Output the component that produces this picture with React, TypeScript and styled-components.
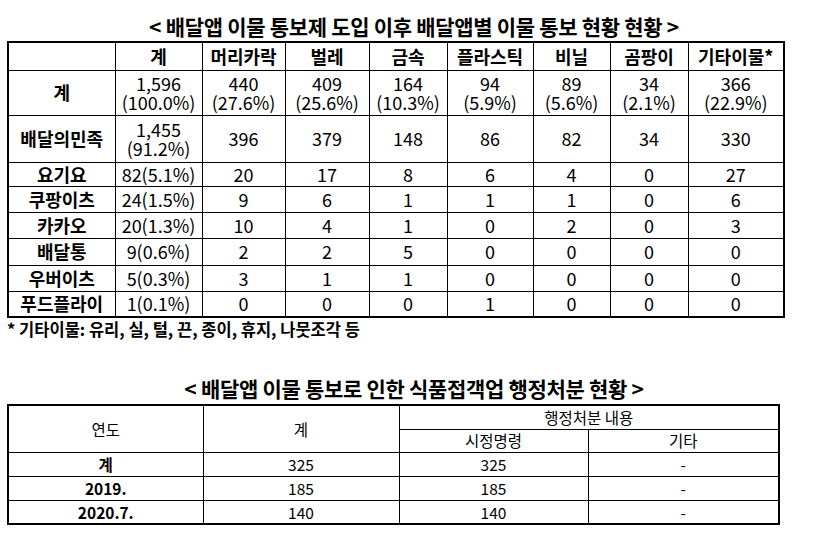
import React from "react";
import styled, { createGlobalStyle } from "styled-components";

const Global = createGlobalStyle`
  html, body { margin: 0; padding: 0; background: #fff; }
  body { font-family: "Noto Sans CJK KR", "Noto Sans", sans-serif; color: #000; }
`;

const Page = styled.div`
  width: 816px;
  height: 538px;
  overflow: hidden;
  display: flex;
  flex-direction: column;
`;

const Title = styled.div<{ $top: number; $h: number }>`
  height: ${(p) => p.$h}px;
  box-sizing: border-box;
  padding-top: ${(p) => p.$top}px;
  padding-left: 12px;
  text-align: center;
  font-size: 21px;
  font-weight: 700;
  line-height: 24px;
  letter-spacing: -0.3px;
  white-space: nowrap;
`;

const TableWrap = styled.div`
  padding-left: 7px;
`;

const Table = styled.table<{ $w: number; $fs: number }>`
  width: ${(p) => p.$w}px;
  border-collapse: collapse;
  table-layout: fixed;
  border: 2px solid #000;
  font-size: ${(p) => p.$fs}px;
  line-height: 1.05;
`;

const Row = styled.tr<{ $h: number }>`
  height: ${(p) => p.$h}px;
`;

const Cell = styled.td<{ $bold?: boolean }>`
  border: 1px solid #000;
  padding: 0;
  text-align: center;
  vertical-align: middle;
  font-weight: ${(p) => (p.$bold ? 700 : 400)};
  white-space: nowrap;
`;

const Line = styled.div`
  line-height: 19px;
`;

const Note = styled.div`
  padding-left: 7px;
  height: 22px;
  font-size: 16.5px;
  font-weight: 700;
  line-height: 22px;
`;

const Spacer = styled.div<{ $h: number }>`
  height: ${(p) => p.$h}px;
`;

const cols1 = [107, 87, 83, 84, 78, 86, 77, 78, 96];
const head1 = ["", "계", "머리카락", "벌레", "금속", "플라스틱", "비닐", "곰팡이", "기타이물*"];

type R = { label: string; h: number; cells: string[] };
const rows1: R[] = [
  { label: "계", h: 45, cells: ["1,596\n(100.0%)", "440\n(27.6%)", "409\n(25.6%)", "164\n(10.3%)", "94\n(5.9%)", "89\n(5.6%)", "34\n(2.1%)", "366\n(22.9%)"] },
  { label: "배달의민족", h: 47, cells: ["1,455\n(91.2%)", "396", "379", "148", "86", "82", "34", "330"] },
  { label: "요기요", h: 24, cells: ["82(5.1%)", "20", "17", "8", "6", "4", "0", "27"] },
  { label: "쿠팡이츠", h: 26, cells: ["24(1.5%)", "9", "6", "1", "1", "1", "0", "6"] },
  { label: "카카오", h: 26, cells: ["20(1.3%)", "10", "4", "1", "0", "2", "0", "3"] },
  { label: "배달통", h: 27, cells: ["9(0.6%)", "2", "2", "5", "0", "0", "0", "0"] },
  { label: "우버이츠", h: 26, cells: ["5(0.3%)", "3", "1", "1", "0", "0", "0", "0"] },
  { label: "푸드플라이", h: 26, cells: ["1(0.1%)", "0", "0", "0", "1", "0", "0", "0"] },
];

const cols2 = [195, 196, 189, 191];
const rows2 = [
  ["계", "325", "325", "-"],
  ["2019.", "185", "185", "-"],
  ["2020.7.", "140", "140", "-"],
];

const Multi = ({ text }: { text: string }) => {
  const parts = text.split("\n");
  if (parts.length === 1) return <>{text}</>;
  return (
    <>
      {parts.map((t, i) => (
        <Line key={i}>{t}</Line>
      ))}
    </>
  );
};

export default function App() {
  return (
    <Page>
      <Global />
      <Title $top={14} $h={41}>&lt; 배달앱 이물 통보제 도입 이후 배달앱별 이물 통보 현황 현황 &gt;</Title>
      <TableWrap>
        <Table $w={776} $fs={18}>
          <colgroup>
            {cols1.map((w, i) => (
              <col key={i} style={{ width: w }} />
            ))}
          </colgroup>
          <tbody>
            <Row $h={28}>
              {head1.map((h, i) => (
                <Cell key={i} $bold>{h}</Cell>
              ))}
            </Row>
            {rows1.map((r) => (
              <Row key={r.label} $h={r.h}>
                <Cell $bold>{r.label}</Cell>
                {r.cells.map((c, i) => (
                  <Cell key={i}>
                    <Multi text={c} />
                  </Cell>
                ))}
              </Row>
            ))}
          </tbody>
        </Table>
      </TableWrap>
      <Note>* 기타이물: 유리, 실, 털, 끈, 종이, 휴지, 나뭇조각 등</Note>
      <Spacer $h={33} />
      <Title $top={3} $h={31}>&lt; 배달앱 이물 통보로 인한 식품접객업 행정처분 현황 &gt;</Title>
      <TableWrap>
        <Table $w={771} $fs={15.5}>
          <colgroup>
            {cols2.map((w, i) => (
              <col key={i} style={{ width: w }} />
            ))}
          </colgroup>
          <tbody>
            <Row $h={24}>
              <Cell rowSpan={2}>연도</Cell>
              <Cell rowSpan={2}>계</Cell>
              <Cell colSpan={2}>행정처분 내용</Cell>
            </Row>
            <Row $h={23}>
              <Cell>시정명령</Cell>
              <Cell>기타</Cell>
            </Row>
            {rows2.map((r) => (
              <Row key={r[0]} $h={24}>
                <Cell $bold>{r[0]}</Cell>
                <Cell>{r[1]}</Cell>
                <Cell>{r[2]}</Cell>
                <Cell>{r[3]}</Cell>
              </Row>
            ))}
          </tbody>
        </Table>
      </TableWrap>
    </Page>
  );
}
